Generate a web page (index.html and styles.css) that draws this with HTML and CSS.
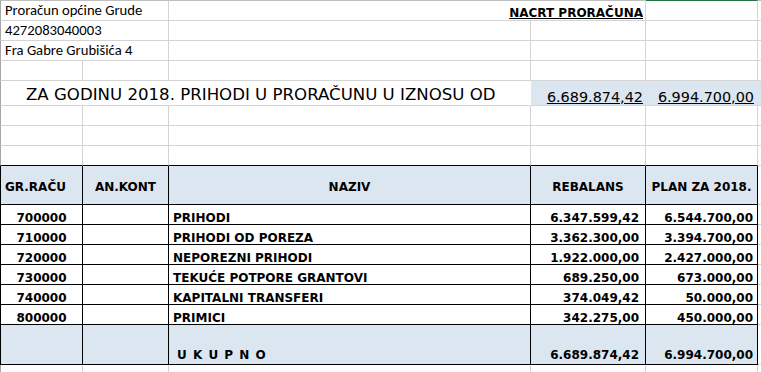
FILE: index.html
```html
<!DOCTYPE html>
<html lang="hr">
<head>
<meta charset="utf-8">
<title>Proračun općine Grude</title>
<link rel="stylesheet" href="styles.css">
</head>
<body>
<div class="sheet">
  <!-- row 1 -->
  <div class="c top first s2 txt">Proračun općine Grude</div>
  <div class="c top s2 right nacrt"><span>NACRT PRORAČUNA</span></div>
  <div class="c top sel"></div>
  <div class="c top last"></div>
  <!-- row 2 -->
  <div class="c first s2 txt">4272083040003</div>
  <div class="c"></div>
  <div class="c"></div>
  <div class="c"></div>
  <div class="c last"></div>
  <!-- row 3 -->
  <div class="c first s2 txt">Fra Gabre Grubišića 4</div>
  <div class="c"></div>
  <div class="c"></div>
  <div class="c"></div>
  <div class="c last"></div>
  <!-- row 4 -->
  <div class="c first"></div>
  <div class="c"></div>
  <div class="c"></div>
  <div class="c"></div>
  <div class="c"></div>
  <div class="c last"></div>
  <!-- row 5 -->
  <div class="c first s3 title norb">ZA GODINU 2018. PRIHODI U PRORAČUNU U IZNOSU OD</div>
  <div class="c fill norb right tnum"><span>6.689.874,42</span></div>
  <div class="c fill norb right tnum tnum-e"><span>6.994.700,00</span></div>
  <div class="c fill last"></div>
  <!-- row 6 -->
  <div class="c first"></div>
  <div class="c"></div>
  <div class="c"></div>
  <div class="c"></div>
  <div class="c"></div>
  <div class="c last"></div>
  <!-- row 7 -->
  <div class="c first"></div>
  <div class="c"></div>
  <div class="c"></div>
  <div class="c"></div>
  <div class="c"></div>
  <div class="c last"></div>
  <!-- row 8 -->
  <div class="c first bb"></div>
  <div class="c bb"></div>
  <div class="c bb"></div>
  <div class="c bb"></div>
  <div class="c bb"></div>
  <div class="c last"></div>
  <!-- header -->
  <div class="c first t fill hd">GR.RAČU</div>
  <div class="c t fill hd center">AN.KONT</div>
  <div class="c t fill hd center">NAZIV</div>
  <div class="c t fill hd center">REBALANS</div>
  <div class="c t fill hd center">PLAN ZA 2018.</div>
  <div class="c last"></div>
  <!-- data -->
  <div class="c first t d center">700000</div>
  <div class="c t d"></div>
  <div class="c t d">PRIHODI</div>
  <div class="c t d num">6.347.599,42</div>
  <div class="c t d num num-e">6.544.700,00</div>
  <div class="c last"></div>

  <div class="c first t d center">710000</div>
  <div class="c t d"></div>
  <div class="c t d">PRIHODI OD POREZA</div>
  <div class="c t d num">3.362.300,00</div>
  <div class="c t d num num-e">3.394.700,00</div>
  <div class="c last"></div>

  <div class="c first t d center">720000</div>
  <div class="c t d"></div>
  <div class="c t d">NEPOREZNI PRIHODI</div>
  <div class="c t d num">1.922.000,00</div>
  <div class="c t d num num-e">2.427.000,00</div>
  <div class="c last"></div>

  <div class="c first t d center">730000</div>
  <div class="c t d"></div>
  <div class="c t d">TEKUĆE POTPORE GRANTOVI</div>
  <div class="c t d num">689.250,00</div>
  <div class="c t d num num-e">673.000,00</div>
  <div class="c last"></div>

  <div class="c first t d center">740000</div>
  <div class="c t d"></div>
  <div class="c t d">KAPITALNI TRANSFERI</div>
  <div class="c t d num">374.049,42</div>
  <div class="c t d num num-e">50.000,00</div>
  <div class="c last"></div>

  <div class="c first t d center">800000</div>
  <div class="c t d"></div>
  <div class="c t d">PRIMICI</div>
  <div class="c t d num">342.275,00</div>
  <div class="c t d num num-e">450.000,00</div>
  <div class="c last"></div>

  <!-- total -->
  <div class="c first t fill d bot"></div>
  <div class="c t fill d bot"></div>
  <div class="c t fill d bot ukupno">U K U P N O</div>
  <div class="c t fill d bot num">6.689.874,42</div>
  <div class="c t fill d bot num num-e">6.994.700,00</div>
  <div class="c last"></div>

  <!-- row after -->
  <div class="c first"></div>
  <div class="c"></div>
  <div class="c"></div>
  <div class="c"></div>
  <div class="c"></div>
  <div class="c last"></div>
</div>
</body>
</html>
```

FILE: styles.css
```css
html, body {
  margin: 0;
  padding: 0;
  background: #ffffff;
  overflow: hidden;
}

.sheet {
  display: grid;
  grid-template-columns: 83px 86px 362px 115px 112px 1fr;
  grid-template-rows: 21px 20px 20px 20px 25px 20px 20px 20px 39px repeat(6, 20px) 40px 20px;
  width: 761px;
  font-family: "DejaVu Sans", Verdana, sans-serif;
  color: #000000;
}

.c {
  box-sizing: border-box;
  border-right: 1px solid #d4d4d4;
  border-bottom: 1px solid #d4d4d4;
  display: flex;
  align-items: flex-end;
  padding: 0 4px 0 4px;
  white-space: nowrap;
  overflow: visible;
  font-size: 12px;
  line-height: 12px;
  min-width: 0;
}

.txt {
  font-family: Calibri, Carlito, Lato, sans-serif;
  font-size: 14.67px;
  line-height: 18px;
  padding-bottom: 1px;
}

.first { border-left: 1px solid #a6a6a6; }
.last { border-right: none; }
.top { border-top: 1px solid #bfbfbf; }
.sel { border-top: 1px solid #217346; }

.s2 { grid-column: span 2; }
.s3 { grid-column: span 3; }

.right { justify-content: flex-end; }
.center { justify-content: center; }

.nacrt {
  padding-right: 2px;
  line-height: 14px;
}
.nacrt span {
  font-weight: bold;
  text-decoration: underline;
}

.title {
  font-size: 16.6px;
  line-height: 20px;
  padding-left: 25px;
}

.norb { border-right-color: transparent; }

.fill { background: #dce6f1; }

.tnum {
  font-size: 14.4px;
  line-height: 16px;
  padding-right: 2px;
}
.tnum-e { padding-right: 3px; }
.tnum span { text-decoration: underline; }

.bb { border-bottom-color: #000000; }

.t {
  border-right-color: #000000;
  border-bottom-color: #000000;
}
.first.t { border-left-color: #000000; }

.hd {
  font-weight: bold;
  line-height: 14px;
  align-items: center;
  padding-top: 3px;
}

.d {
  font-weight: bold;
}

.num {
  justify-content: flex-end;
  padding-right: 6px;
}
.num-e { padding-right: 4px; }

.ukupno {
  padding-left: 8px;
  word-spacing: 2px;
}

.bot { padding-bottom: 3px; }
```
